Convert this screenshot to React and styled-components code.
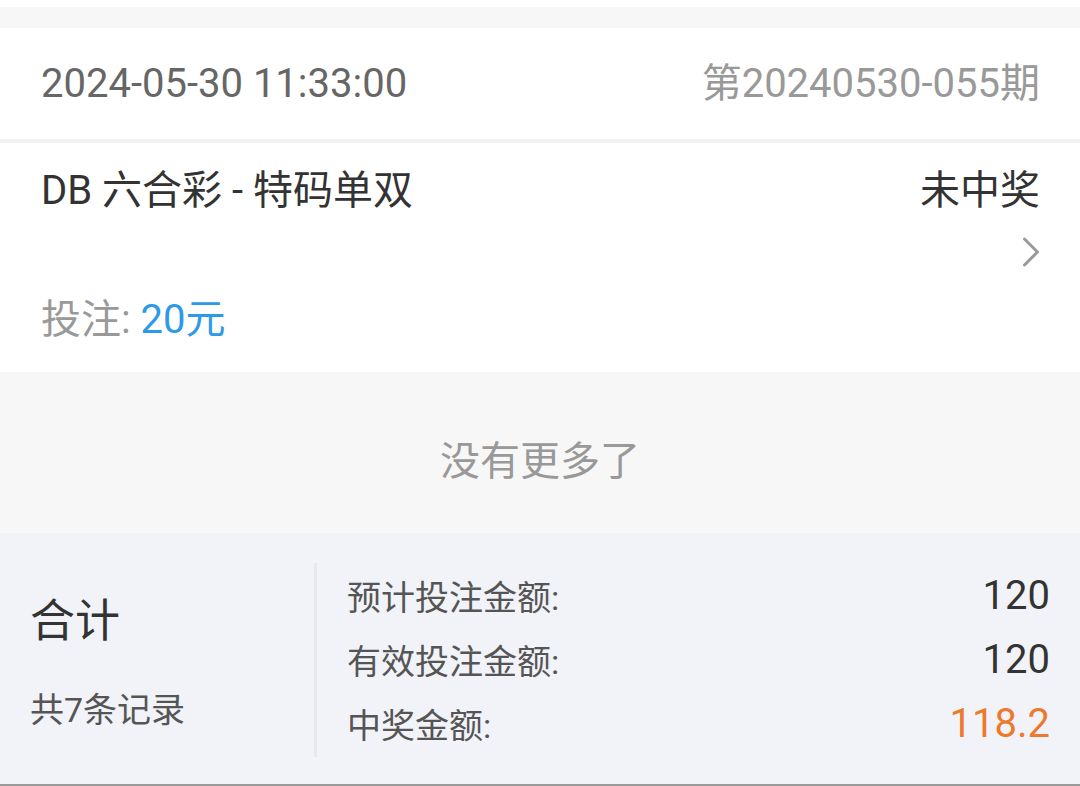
import React from "react";
import styled, { createGlobalStyle } from "styled-components";

const Global = createGlobalStyle`
  html, body { margin: 0; padding: 0; background: #ffffff; }
  body { font-family: Roboto, "Noto Sans CJK SC", sans-serif; }
  * { box-sizing: border-box; }
`;

const Page = styled.div`
  width: 1080px;
  padding-top: 7px;
  background: #ffffff;
`;

const Strip = styled.div`
  height: ${(p) => p.$h}px;
  background: ${(p) => p.$bg};
`;

const HeaderRow = styled.div`
  height: 111px;
  display: flex;
  align-items: center;
  justify-content: space-between;
  padding: 0 40px 0 41px;
  background: #ffffff;
`;

const Text = styled.span`
  font-size: ${(p) => p.$size || 40}px;
  color: ${(p) => p.$color || "#333"};
  line-height: 1;
  white-space: nowrap;
`;

const Item = styled.div`
  background: #ffffff;
  padding: 20px 40px 24px 41px;
  display: flex;
  flex-direction: column;
`;

const ItemTop = styled.div`
  display: flex;
  justify-content: space-between;
  align-items: center;
  height: 56px;
`;

const ChevronRow = styled.div`
  display: flex;
  justify-content: flex-end;
  margin-top: 18px;
  height: 30px;
`;

const BetLine = styled.div`
  margin-top: 25px;
  height: 56px;
  display: flex;
  align-items: center;
`;

const NoMore = styled.div`
  background: #f7f7f7;
  height: 161px;
  padding-top: 62px;
  display: flex;
  justify-content: center;
  align-items: flex-start;
`;

const NoMoreText = styled.div`
  font-size: 40px;
  line-height: 56px;
  color: #999999;
`;

const Footer = styled.div`
  background: #f2f3f8;
  padding: 30px 0 27px;
  border-bottom: 2px solid #9a9a9a;
  display: flex;
  height: 253px;
`;

const TotalCol = styled.div`
  width: 314px;
  padding: 31px 0 0 30px;
  display: flex;
  flex-direction: column;
`;

const TotalTitle = styled.div`
  font-size: 45px;
  line-height: 56px;
  color: #333333;
`;

const TotalCount = styled.div`
  margin-top: 36px;
  font-size: 34px;
  line-height: 48px;
  color: #555555;
`;

const SumCol = styled.div`
  flex: 1;
  border-left: 3px solid #e7e8ec;
  padding: 0 30px 0 30px;
  display: flex;
  flex-direction: column;
`;

const SumRow = styled.div`
  height: 64px;
  display: flex;
  align-items: center;
  justify-content: space-between;
`;

const SumLabel = styled.span`
  font-size: 34px;
  color: #555555;
`;

const SumValue = styled.span`
  font-size: 40px;
  color: ${(p) => p.$color || "#333333"};
`;

const Chevron = () => (
  <svg width="18" height="30" viewBox="0 0 18 30" fill="none">
    <path d="M2.5 2 L15.5 15 L2.5 28" stroke="#9a9a9a" strokeWidth="3" strokeLinecap="round" strokeLinejoin="round" />
  </svg>
);

export default function App() {
  return (
    <Page>
      <Global />
      <Strip $h={21} $bg="#f7f7f7" />
      <HeaderRow>
        <Text $color="#666666">2024-05-30 11:33:00</Text>
        <Text $color="#999999">第20240530-055期</Text>
      </HeaderRow>
      <Strip $h={4} $bg="#f2f2f2" />
      <Item>
        <ItemTop>
          <Text $color="#333333">DB 六合彩 - 特码单双</Text>
          <Text $color="#333333">未中奖</Text>
        </ItemTop>
        <ChevronRow>
          <Chevron />
        </ChevronRow>
        <BetLine>
          <Text $color="#999999">投注: </Text>
          <Text $color="#2c9ae6">&nbsp;20元</Text>
        </BetLine>
      </Item>
      <NoMore>
        <NoMoreText>没有更多了</NoMoreText>
      </NoMore>
      <Footer>
        <TotalCol>
          <TotalTitle>合计</TotalTitle>
          <TotalCount>共7条记录</TotalCount>
        </TotalCol>
        <SumCol>
          <SumRow>
            <SumLabel>预计投注金额:</SumLabel>
            <SumValue>120</SumValue>
          </SumRow>
          <SumRow>
            <SumLabel>有效投注金额:</SumLabel>
            <SumValue>120</SumValue>
          </SumRow>
          <SumRow>
            <SumLabel>中奖金额:</SumLabel>
            <SumValue $color="#ec7a2c">118.2</SumValue>
          </SumRow>
        </SumCol>
      </Footer>
    </Page>
  );
}
